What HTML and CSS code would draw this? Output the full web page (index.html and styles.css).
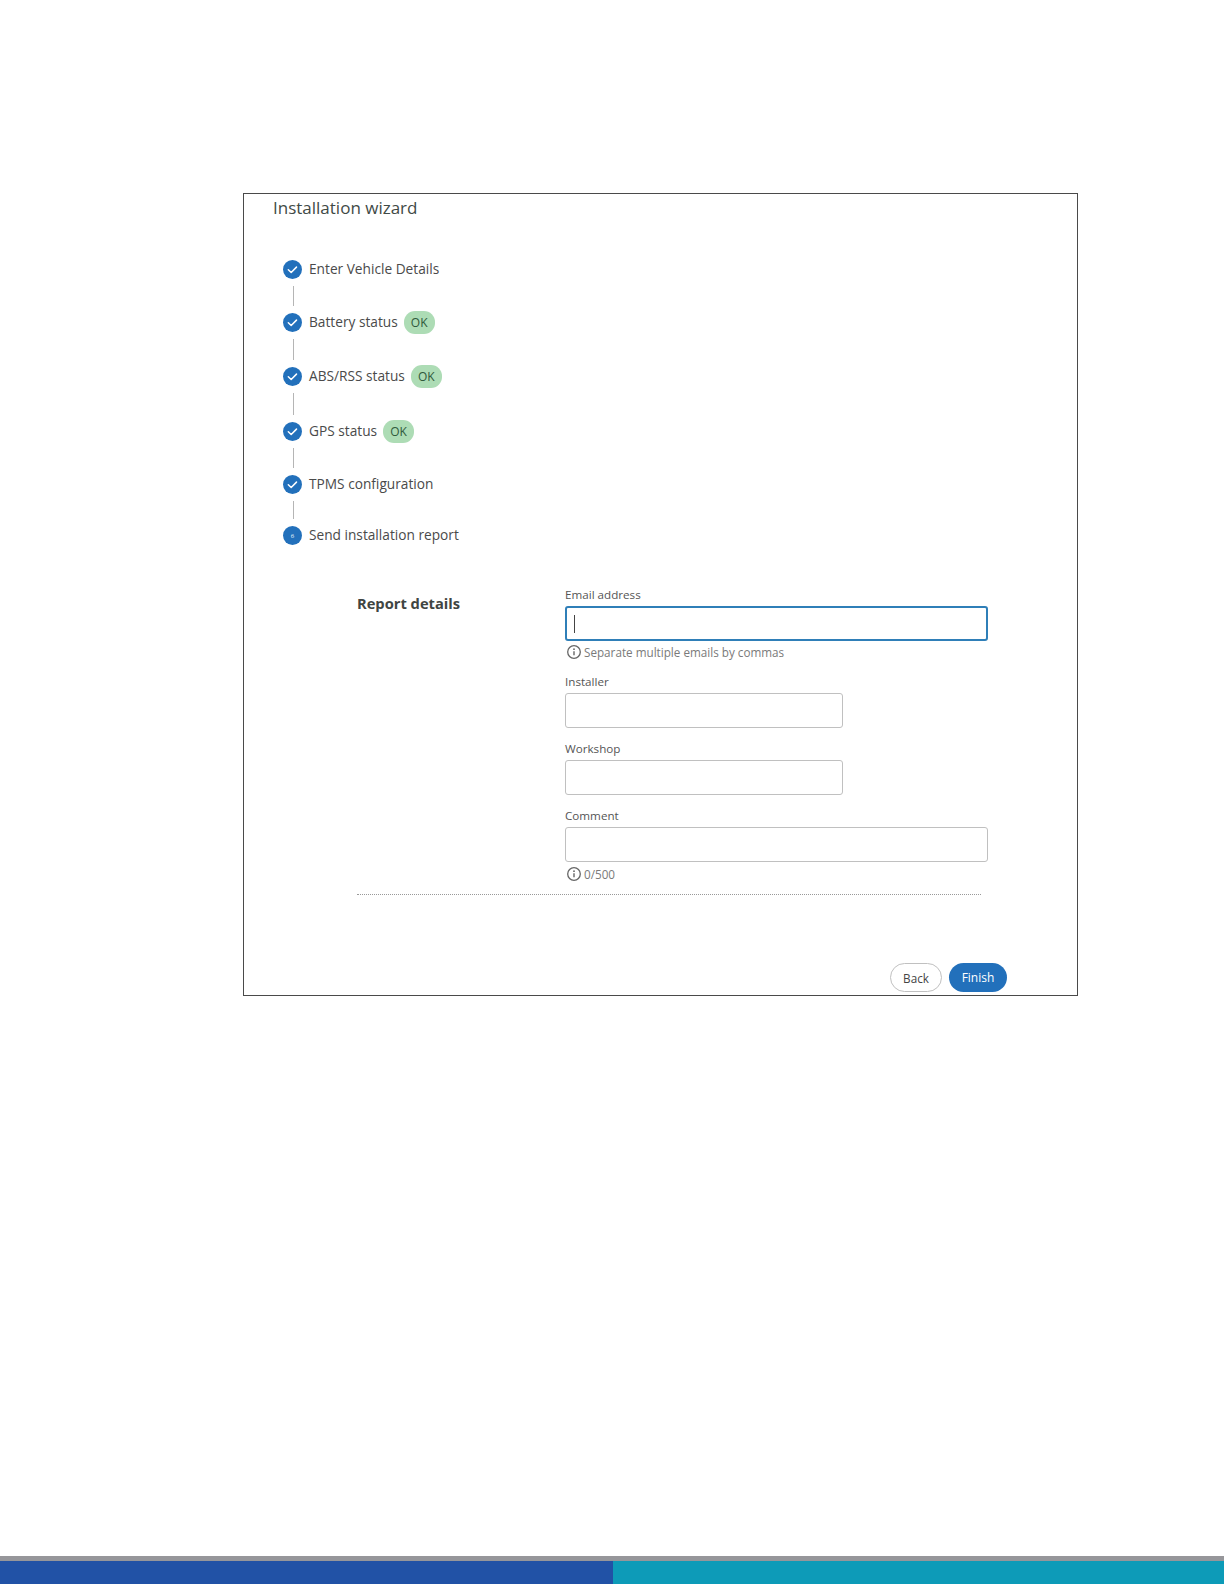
FILE: index.html
```html
<!DOCTYPE html>
<html lang="en">
<head>
<meta charset="utf-8">
<title>Installation wizard</title>
<link rel="stylesheet" href="styles.css">
</head>
<body>
<main class="page">
  <section class="wizard">
    <h1 class="title">Installation wizard</h1>
    <ol class="steps">
      <li class="step">
        <svg class="step-icon" viewBox="0 0 20 20"><circle cx="10" cy="10" r="10" fill="#2270bb"/><path d="M5.6 10.3l3 2.8 5.6-5.6" fill="none" stroke="#fff" stroke-width="1.6" stroke-linecap="round" stroke-linejoin="round"/></svg>
        <span class="step-label">Enter Vehicle Details</span>
      </li>
      <li class="line line-a"></li>
      <li class="step">
        <svg class="step-icon" viewBox="0 0 20 20"><circle cx="10" cy="10" r="10" fill="#2270bb"/><path d="M5.6 10.3l3 2.8 5.6-5.6" fill="none" stroke="#fff" stroke-width="1.6" stroke-linecap="round" stroke-linejoin="round"/></svg>
        <span class="step-label">Battery status</span><span class="badge">OK</span>
      </li>
      <li class="line line-b"></li>
      <li class="step">
        <svg class="step-icon" viewBox="0 0 20 20"><circle cx="10" cy="10" r="10" fill="#2270bb"/><path d="M5.6 10.3l3 2.8 5.6-5.6" fill="none" stroke="#fff" stroke-width="1.6" stroke-linecap="round" stroke-linejoin="round"/></svg>
        <span class="step-label">ABS/RSS status</span><span class="badge">OK</span>
      </li>
      <li class="line line-d"></li>
      <li class="step">
        <svg class="step-icon" viewBox="0 0 20 20"><circle cx="10" cy="10" r="10" fill="#2270bb"/><path d="M5.6 10.3l3 2.8 5.6-5.6" fill="none" stroke="#fff" stroke-width="1.6" stroke-linecap="round" stroke-linejoin="round"/></svg>
        <span class="step-label">GPS status</span><span class="badge">OK</span>
      </li>
      <li class="line line-a"></li>
      <li class="step">
        <svg class="step-icon" viewBox="0 0 20 20"><circle cx="10" cy="10" r="10" fill="#2270bb"/><path d="M5.6 10.3l3 2.8 5.6-5.6" fill="none" stroke="#fff" stroke-width="1.6" stroke-linecap="round" stroke-linejoin="round"/></svg>
        <span class="step-label">TPMS configuration</span>
      </li>
      <li class="line line-c"></li>
      <li class="step">
        <span class="step-num">6</span>
        <span class="step-label">Send installation report</span>
      </li>
    </ol>
    <form class="report">
      <h2 class="report-title">Report details</h2>
      <div class="fields">
        <div class="field">
          <label class="label">Email address</label>
          <div class="input input-focus input-wide"><span class="caret"></span></div>
          <p class="hint">
            <svg class="hint-icon" viewBox="0 0 16 16"><circle cx="8" cy="8" r="6.3" fill="none" stroke="#666" stroke-width="1.3"/><path d="M8 7.2v4" stroke="#666" stroke-width="1.4"/><circle cx="8" cy="5.2" r=".9" fill="#666"/></svg>
            Separate multiple emails by commas
          </p>
        </div>
        <div class="field field-plain">
          <label class="label">Installer</label>
          <div class="input input-narrow"></div>
        </div>
        <div class="field field-plain">
          <label class="label">Workshop</label>
          <div class="input input-narrow"></div>
        </div>
        <div class="field field-plain">
          <label class="label">Comment</label>
          <div class="input input-wide"></div>
          <p class="hint">
            <svg class="hint-icon" viewBox="0 0 16 16"><circle cx="8" cy="8" r="6.3" fill="none" stroke="#666" stroke-width="1.3"/><path d="M8 7.2v4" stroke="#666" stroke-width="1.4"/><circle cx="8" cy="5.2" r=".9" fill="#666"/></svg>
            0/500
          </p>
        </div>
      </div>
    </form>
    <hr class="divider">
    <div class="actions">
      <button type="button" class="btn btn-back">Back</button>
      <button type="button" class="btn btn-finish">Finish</button>
    </div>
  </section>
</main>
<footer class="footer">
  <div class="footer-rule"></div>
  <div class="footer-bands">
    <div class="band band-blue"></div>
    <div class="band band-teal"></div>
  </div>
</footer>
</body>
</html>
```
FILE: styles.css
```css
* { box-sizing: border-box; }
html, body { margin: 0; padding: 0; }
body {
  width: 1224px;
  height: 1584px;
  display: flex;
  flex-direction: column;
  background: #fff;
  font-family: "Open Sans", "Noto Sans", sans-serif;
  color: #444;
}
.page { flex: 1; padding: 193px 0 0 243px; }
.wizard {
  width: 835px;
  height: 803px;
  border: 1px solid #4a4a4a;
  padding: 0 0 0 29px;
  display: flex;
  flex-direction: column;
}
.title {
  margin: 2px 0 0;
  font-size: 17px;
  line-height: 24px;
  font-weight: 400;
  color: #3f4a46;
}
.steps {
  list-style: none;
  margin: 38px 0 0 10px;
  padding: 0;
}
.step {
  display: flex;
  align-items: center;
  height: 22px;
  font-size: 13.7px;
  color: #4a4a4a;
}
.step-icon { width: 19px; height: 19px; flex: none; }
.step-num {
  width: 19px;
  height: 19px;
  flex: none;
  border-radius: 50%;
  background: #2270bb;
  color: #fff;
  font-size: 6px;
  line-height: 20px;
  text-align: center;
}
.step-label { margin-left: 7px; padding-bottom: 2px; white-space: nowrap; }
.badge {
  margin-left: 6px;
  width: 31px;
  height: 23px;
  border-radius: 11px;
  background: #addcb5;
  color: #2f5a3c;
  font-size: 12px;
  line-height: 23px;
  text-align: center;
}
.line {
  width: 1px;
  margin-left: 10px;
  background: #b5b5b5;
  background-clip: content-box;
  padding: 6px 0 5px;
}
.line-a { height: 31px; }
.line-b { height: 32px; }
.line-c { height: 29px; }
.line-d { height: 33px; }
.report {
  margin: 37px 0 0 84px;
  display: flex;
}
.report-title {
  width: 208px;
  margin: 10px 0 0;
  font-size: 14.7px;
  line-height: 20px;
  font-weight: 700;
  color: #3f4542;
}
.fields { display: flex; flex-direction: column; margin-top: 3px; }
.field-plain { margin-top: 12px; }
.label {
  display: block;
  height: 20px;
  font-size: 11.65px;
  line-height: 17px;
  color: #555;
}
.input {
  height: 35px;
  border: 1px solid #c0c0c0;
  border-radius: 3px;
  background: #fff;
}
.input-wide { width: 423px; }
.input-narrow { width: 278px; }
.input-focus {
  border: 2px solid #2f7fb8;
  padding: 7px 0 0 7px;
}
.caret { display: block; width: 1px; height: 18px; background: #444; }
.hint {
  margin: 3px 0 0;
  height: 18px;
  display: flex;
  align-items: center;
  gap: 2px;
  padding-left: 1px;
  font-size: 11.7px;
  color: #7a7a7a;
}
.input-focus + .hint { margin-top: 2px; }
.hint-icon { width: 16px; height: 16px; flex: none; }
.divider {
  width: 624px;
  margin: 11px 0 0 84px;
  border: 0;
  border-top: 1px dotted #999;
}
.actions {
  margin-top: auto;
  padding: 0 70px 3px 0;
  display: flex;
  justify-content: flex-end;
  gap: 7px;
}
.btn {
  height: 29px;
  border-radius: 15px;
  font-family: inherit;
  font-size: 11.7px;
  padding: 0;
}
.btn-back { width: 52px; background: #fff; border: 1px solid #c0c0c0; color: #444; }
.btn-finish { width: 58px; background: #2270bb; border: 0; color: #fff; font-size: 12px; }
.footer { flex: none; }
.footer-rule { height: 5px; background: #96969a; }
.footer-bands { display: flex; height: 23px; }
.band-blue { width: 613px; background: #2152a6; }
.band-teal { flex: 1; background: #0d9bb8; }
```
